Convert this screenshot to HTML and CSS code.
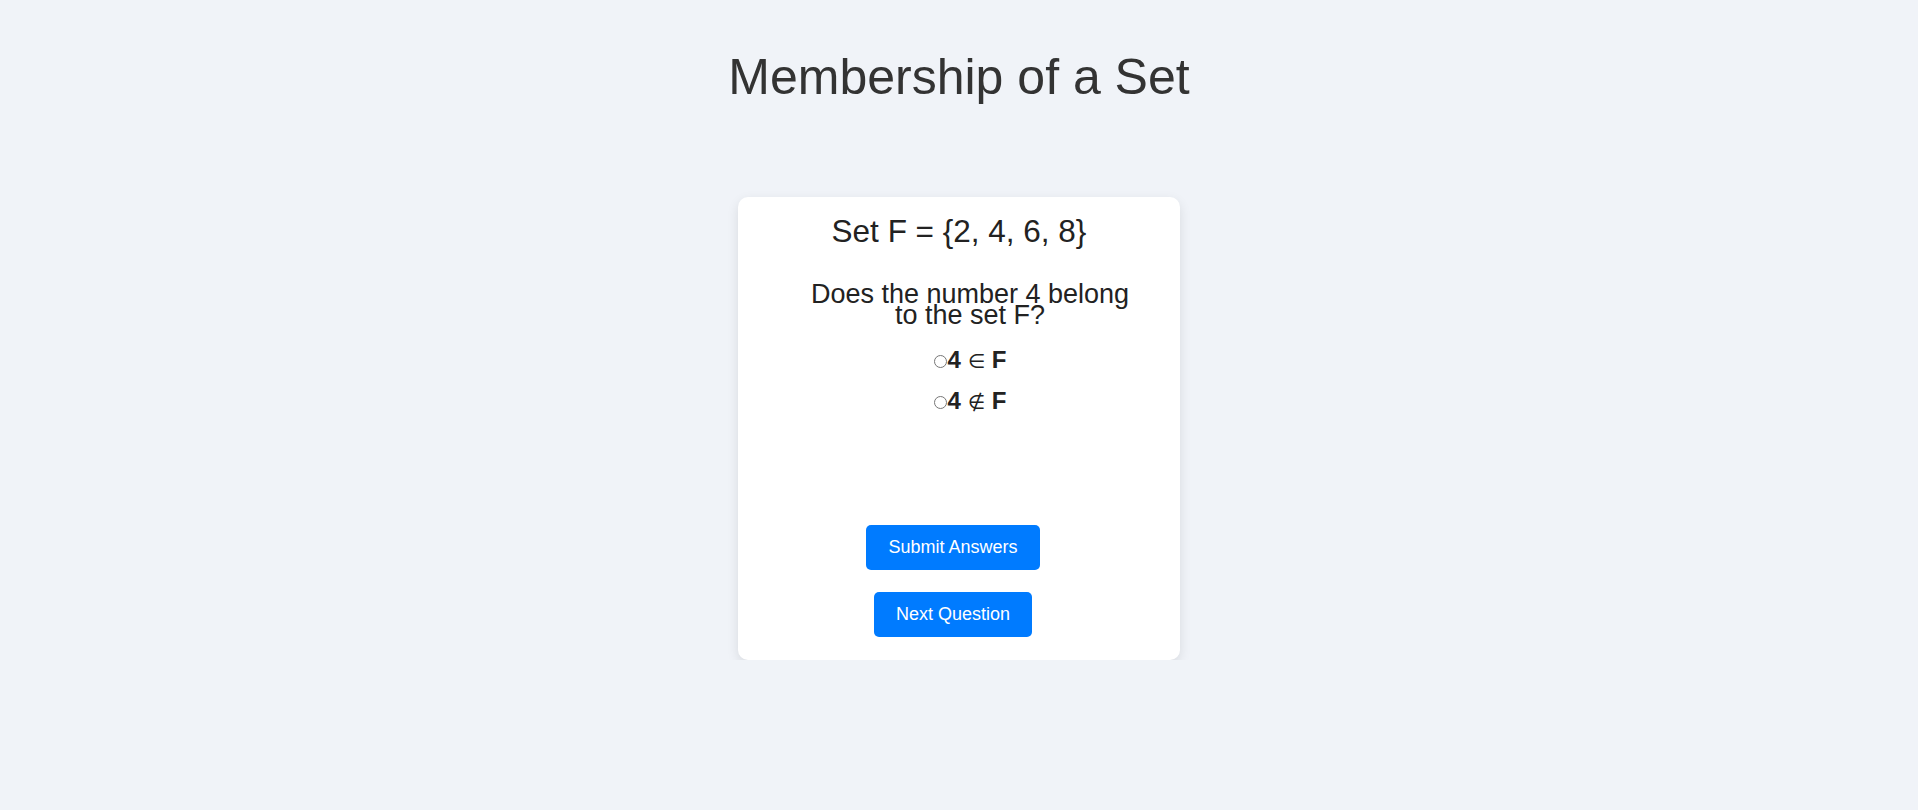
FILE: index.html
```html
<!DOCTYPE html>
<html lang="en">
<head>
<meta charset="utf-8">
<title>Membership of a Set</title>
<link rel="stylesheet" href="styles.css">
</head>
<body>
  <h1 class="title">Membership of a Set</h1>
  <div class="card">
    <h2 class="set">Set F = {2, 4, 6, 8}</h2>
    <div class="quiz">
      <p class="question">Does the number 4 belong to the set F?</p>
      <div class="options">
        <label class="option"><input type="radio" name="q1" class="radio"><b>4</b> <span class="sym">∈</span> <b>F</b></label>
        <label class="option"><input type="radio" name="q1" class="radio"><b>4</b> <span class="sym">∉</span> <b>F</b></label>
      </div>
    </div>
    <div class="actions">
      <button class="btn">Submit Answers</button>
      <button class="btn">Next Question</button>
    </div>
  </div>
</body>
</html>
```

FILE: styles.css
```css
html, body {
  margin: 0;
  padding: 0;
}

body {
  background: #f0f3f8;
  font-family: "Liberation Sans", Arial, sans-serif;
  color: #222;
}

.title {
  margin: 0;
  padding-top: 48px;
  font-size: 50px;
  font-weight: normal;
  line-height: normal;
  color: #333;
  text-align: center;
}

.card {
  box-sizing: border-box;
  width: 442px;
  margin: 91px auto 0;
  padding: 16px 20px 23px;
  background: #fff;
  border-radius: 10px;
  box-shadow: 0 4px 12px rgba(0, 0, 0, 0.1);
  text-align: center;
}

.set {
  margin: 0;
  font-size: 31.5px;
  font-weight: normal;
  line-height: 36.8px;
  color: #222;
}

.quiz {
  width: 330px;
  padding-left: 22px;
  margin: 34px auto 0;
}

.question {
  margin: 0;
  font-size: 27px;
  line-height: 21.6px;
}

.options {
  margin-top: 19px;
  display: flex;
  flex-direction: column;
  align-items: center;
  gap: 13.4px;
}

.option {
  display: block;
  font-size: 24px;
  line-height: 27.6px;
  color: #222;
}

.option b {
  font-weight: bold;
}

.sym {
  font-family: "DejaVu Sans", sans-serif;
  font-size: 20px;
  font-weight: normal;
  line-height: 1;
}

.radio {
  margin: 3px 1px 0 0;
  width: 13px;
  height: 13px;
}

.actions {
  margin-top: 110px;
  padding-right: 12px;
  display: flex;
  flex-direction: column;
  align-items: center;
  gap: 22px;
}

.btn {
  border: none;
  border-radius: 5px;
  background: #007bff;
  color: #fff;
  font-family: "Liberation Sans", Arial, sans-serif;
  font-size: 18px;
  line-height: 21px;
  padding: 12px 22px;
  cursor: pointer;
}
```
